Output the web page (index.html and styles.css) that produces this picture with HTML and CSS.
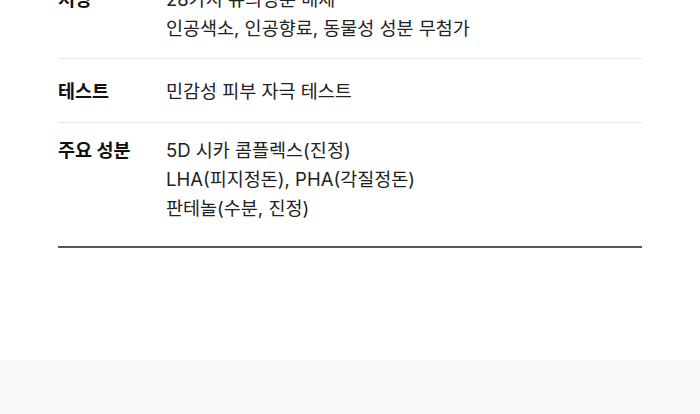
FILE: index.html
```html
<!DOCTYPE html>
<html lang="ko">
<head>
<meta charset="utf-8">
<link rel="stylesheet" href="styles.css">
</head>
<body>
<main class="page">
  <section class="spec">
    <dl class="spec-list">
      <div class="spec-row spec-row--first">
        <dt class="spec-label">처방</dt>
        <dd class="spec-value">28가지 유의성분 배제<br>인공색소, 인공향료, 동물성 성분 무첨가</dd>
      </div>
      <div class="spec-row spec-row--single">
        <dt class="spec-label">테스트</dt>
        <dd class="spec-value">민감성 피부 자극 테스트</dd>
      </div>
      <div class="spec-row spec-row--last">
        <dt class="spec-label">주요 성분</dt>
        <dd class="spec-value">5D 시카 콤플렉스(진정)<br>LHA(피지정돈), PHA(각질정돈)<br>판테놀(수분, 진정)</dd>
      </div>
    </dl>
  </section>
  <footer class="footer"></footer>
</main>
</body>
</html>
```

FILE: styles.css
```css
html, body {
  margin: 0;
  padding: 0;
  background: #ffffff;
}

body {
  font-family: Inter, "Noto Sans CJK KR", "Noto Sans", sans-serif;
  color: #1a1a1a;
  overflow: hidden;
}

.page {
  display: flex;
  flex-direction: column;
}

.spec {
  padding: 0 58px;
  margin-top: -30px;
}

.spec-list {
  margin: 0;
  padding: 0 0 8px;
  border-bottom: 2px solid #555555;
}

.spec-row {
  display: grid;
  grid-template-columns: 108px 1fr;
  padding: 15px 0;
  border-bottom: 1px solid #e6e6e6;
  font-size: 18.5px;
  line-height: 29px;
}

.spec-row--single {
  padding: 18px 0 16px;
}

.spec-row--last {
  padding-top: 13px;
  border-bottom: none;
}

.spec-label {
  margin: 0;
  font-weight: 700;
  color: #111111;
}

.spec-value {
  margin: 0;
  color: #222222;
}

.footer {
  margin-top: 112px;
  height: 80px;
  background: #fafafa;
}
```
